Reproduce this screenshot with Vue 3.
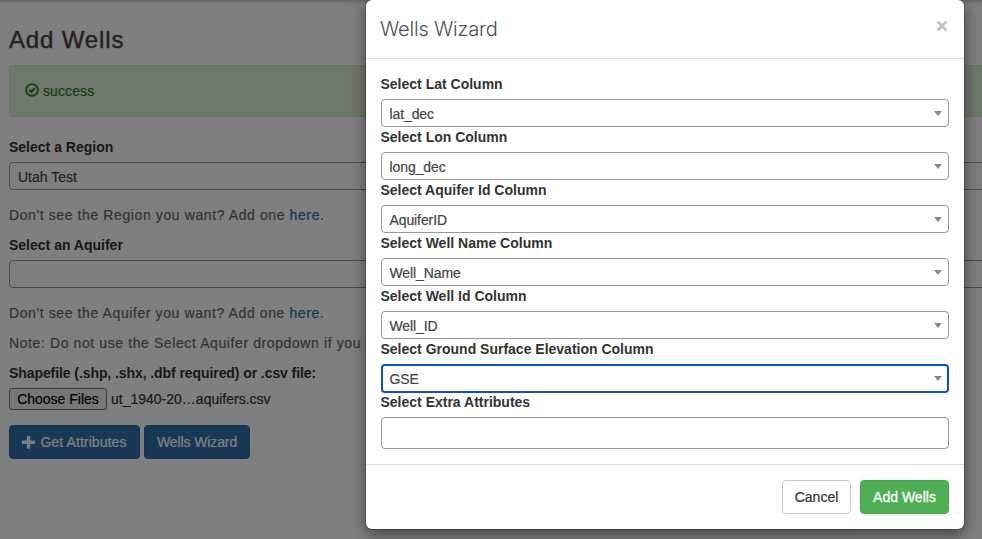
<script setup>
const fields = [
  { label: 'Select Lat Column', value: 'lat_dec' },
  { label: 'Select Lon Column', value: 'long_dec' },
  { label: 'Select Aquifer Id Column', value: 'AquiferID' },
  { label: 'Select Well Name Column', value: 'Well_Name' },
  { label: 'Select Well Id Column', value: 'Well_ID' },
  { label: 'Select Ground Surface Elevation Column', value: 'GSE', focused: true },
]
</script>

<template>
  <div class="screen">
    <main class="page">
      <h1>Add Wells</h1>
      <div class="alert">
        <svg class="ok" width="14" height="14" viewBox="0 0 14 14">
          <circle cx="7" cy="7" r="5.9" fill="none" stroke="currentColor" stroke-width="1.8" />
          <path d="M4.2 6.9 L6.2 8.8 L9.8 5.2" fill="none" stroke="currentColor" stroke-width="2.1" />
        </svg>
        <span>success</span>
      </div>
      <label class="label">Select a Region</label>
      <div class="select">Utah Test</div>
      <p class="hint">Don't see the Region you want? Add one <a>here</a>.</p>
      <label class="label">Select an Aquifer</label>
      <div class="select"></div>
      <p class="hint">Don't see the Aquifer you want? Add one <a>here</a>.</p>
      <p class="hint note">Note: Do not use the Select Aquifer dropdown if you</p>
      <label class="label file-label">Shapefile (.shp, .shx, .dbf required) or .csv file:</label>
      <div class="file">
        <button class="choose">Choose Files</button>
        <span>ut_1940-20…aquifers.csv</span>
      </div>
      <div class="actions">
        <button class="btn primary get">
          <svg width="13" height="13" viewBox="0 0 13 13">
            <path d="M4.8 0h3.4v4.6H13v3.5H8.2v4.7H4.8V8.1H0V4.6h4.8z" fill="currentColor" />
          </svg>
          <span>Get Attributes</span>
        </button>
        <button class="btn primary wiz">Wells Wizard</button>
      </div>
    </main>

    <div class="backdrop">
      <section class="modal">
        <header class="head">
          <h2>Wells Wizard</h2>
          <svg class="close" width="12" height="12" viewBox="0 0 12 12">
            <path d="M1.6 1.6 L10.4 10.4 M10.4 1.6 L1.6 10.4" stroke="#c4c4c4" stroke-width="2.8" />
          </svg>
        </header>
        <div class="body">
          <div v-for="f in fields" :key="f.label" class="field">
            <label class="label">{{ f.label }}</label>
            <div class="select" :class="{ focused: f.focused }">
              <span>{{ f.value }}</span>
              <i class="caret"></i>
            </div>
          </div>
          <div class="field">
            <label class="label">Select Extra Attributes</label>
            <div class="select tall"></div>
          </div>
        </div>
        <footer class="foot">
          <button class="btn cancel">Cancel</button>
          <button class="btn add">Add Wells</button>
        </footer>
      </section>
    </div>
  </div>
</template>

<style>
body {
  margin: 0;
  overflow: hidden;
}
</style>

<style scoped>
.screen {
  position: relative;
  width: 982px;
  height: 539px;
  overflow: hidden;
  background: #fff;
  font: 14px/20px "Liberation Sans", Arial, sans-serif;
  color: #333;
}
.screen * {
  box-sizing: border-box;
}
.page {
  height: 539px;
  width: 1200px;
  padding: 25px 9px 0;
  box-shadow: inset 0 6px 5px -5px rgba(0, 0, 0, 0.3);
}
h1, h2, p {
  margin: 0;
}
h1 {
  font-size: 24px;
  line-height: 30px;
  font-weight: 400;
  letter-spacing: 0.85px;
  color: #444;
  -webkit-text-stroke: 0.4px #444;
}
.alert {
  display: flex;
  align-items: center;
  gap: 4px;
  height: 52px;
  margin: 10px 0 20px;
  padding: 0 15px;
  border: 1px solid #d0e9c6;
  border-radius: 4px;
  background: #dff0d8;
  color: #2f7a36;
}
.alert span {
  letter-spacing: 0.1px;
  -webkit-text-stroke: 0.2px #2f7a36;
}
.ok {
  margin-top: -2px;
}
.label {
  display: block;
  height: 20px;
  margin-bottom: 5px;
  font-weight: 700;
  white-space: nowrap;
}
.select {
  display: flex;
  align-items: center;
  justify-content: space-between;
  height: 28px;
  padding: 2px 6px 0 8px;
  border: 1px solid #999;
  border-radius: 4px;
  background: #fff;
  color: #444;
  -webkit-text-stroke: 0.2px #444;
}
.hint {
  margin: 15px 0 10px;
  letter-spacing: 0.6px;
  color: #666;
  white-space: nowrap;
  -webkit-text-stroke: 0.2px;
}
.hint a {
  color: #2a6db0;
}
.note {
  margin-top: 0;
}
.file-label {
  letter-spacing: -0.08px;
}
.file {
  display: flex;
  align-items: center;
  gap: 4px;
  height: 22px;
  -webkit-text-stroke: 0.2px;
}
button {
  font: inherit;
  white-space: nowrap;
  -webkit-text-stroke: 0.2px;
}
.choose {
  width: 98px;
  height: 22px;
  padding: 0;
  border: 1px solid #767676;
  border-radius: 3px;
  background: #efefef;
  color: #000;
}
.actions {
  display: flex;
  gap: 4px;
  margin-top: 15px;
}
.btn {
  display: flex;
  align-items: center;
  justify-content: center;
  height: 34px;
  padding: 0;
  border: 1px solid;
  border-radius: 4px;
}
.primary {
  gap: 5px;
  border-color: #2a66a0;
  background: #3071ad;
  color: #fff;
}
.get {
  width: 131px;
  letter-spacing: 0.1px;
}
.wiz {
  width: 106px;
  letter-spacing: -0.1px;
}
.backdrop {
  position: absolute;
  inset: 0;
  display: flex;
  align-items: flex-start;
  padding-left: 366px;
  background: rgba(0, 0, 0, 0.5);
}
.modal {
  width: 598px;
  height: 529px;
  border-radius: 6px;
  background: #fff;
  box-shadow: 0 0 0 1px rgba(0, 0, 0, 0.2), 0 5px 15px rgba(0, 0, 0, 0.5);
}
.head {
  display: flex;
  justify-content: space-between;
  height: 59px;
  padding: 14px 16px 0 14px;
  border-bottom: 1px solid #e0e0e0;
}
h2 {
  font: 300 20px/30px Inter, "Liberation Sans", sans-serif;
  letter-spacing: -0.2px;
  color: #505050;
}
.close {
  margin-top: 6px;
}
.body {
  height: 406px;
  padding: 15px 15px 0;
  border-bottom: 1px solid #e0e0e0;
}
.field .label {
  margin-left: -0.5px;
}
.field .select {
  padding-left: 7.5px;
  letter-spacing: -0.1px;
}
.field .focused {
  height: 29px;
  margin-bottom: -1px;
  border: 2px solid #0a53be;
  padding: 1px 5px 0 6.5px;
}
.caret {
  width: 0;
  height: 0;
  margin-bottom: 2px;
  border: 4px solid transparent;
  border-top: 5px solid #888;
  border-bottom: 0;
}
.field .tall {
  height: 32px;
}
.foot {
  display: flex;
  justify-content: flex-end;
  gap: 9px;
  padding: 15px;
}
.cancel {
  width: 69px;
  border-color: #ccc;
  background: #fff;
  color: #333;
}
.add {
  width: 89px;
  border-color: #42a848;
  background: #4fae54;
  color: #fff;
  -webkit-text-stroke: 0.3px #fff;
}
</style>
